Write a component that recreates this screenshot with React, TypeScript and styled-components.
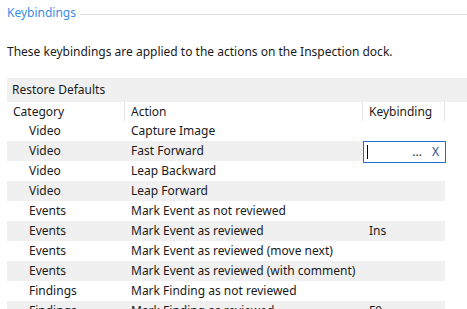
import React from "react";
import styled, { createGlobalStyle } from "styled-components";

const GlobalStyle = createGlobalStyle`
  html, body {
    margin: 0;
    padding: 0;
    background: #ffffff;
  }
  body {
    font-family: "Noto Sans", "Open Sans", sans-serif;
    font-size: 12px;
    color: #1a1a1a;
    overflow: hidden;
  }
`;

interface Binding {
    category: string;
    action: string;
    key?: string;
    editing?: boolean;
}

const bindings: Binding[] = [
    { category: "Video", action: "Capture Image" },
    { category: "Video", action: "Fast Forward", editing: true },
    { category: "Video", action: "Leap Backward" },
    { category: "Video", action: "Leap Forward" },
    { category: "Events", action: "Mark Event as not reviewed" },
    { category: "Events", action: "Mark Event as reviewed", key: "Ins" },
    { category: "Events", action: "Mark Event as reviewed (move next)" },
    { category: "Events", action: "Mark Event as reviewed (with comment)" },
    { category: "Findings", action: "Mark Finding as not reviewed" },
    { category: "Findings", action: "Mark Finding as reviewed", key: "F9" },
];

const App: React.FC = () => {
    return (
        <>
            <GlobalStyle />
            <Page>
                <GroupHeader>
                    <GroupTitle>Keybindings</GroupTitle>
                    <GroupLine />
                </GroupHeader>
                <Description>
                    These keybindings are applied to the actions on the Inspection dock.
                </Description>
                <Toolbar>
                    <ToolButton>Restore Defaults</ToolButton>
                </Toolbar>
                <Table>
                    <HeaderRow>
                        <HeaderCell>Category</HeaderCell>
                        <HeaderCell>Action</HeaderCell>
                        <HeaderCell>Keybinding</HeaderCell>
                    </HeaderRow>
                    {bindings.map((b, i) => (
                        <Row key={i} $striped={i % 2 === 1}>
                            <CategoryCell>{b.category}</CategoryCell>
                            <Cell>{b.action}</Cell>
                            {b.editing ? (
                                <KeyCell>
                                    <Editor>
                                        <Caret />
                                        <EditorDots>...</EditorDots>
                                        <EditorClear>X</EditorClear>
                                    </Editor>
                                </KeyCell>
                            ) : (
                                <KeyCell>{b.key}</KeyCell>
                            )}
                        </Row>
                    ))}
                </Table>
            </Page>
        </>
    );
};

const Page = styled.div`
  padding: 3px 0 0 7px;
  width: 467px;
  box-sizing: border-box;
`;

const GroupHeader = styled.div`
  display: flex;
  align-items: center;
  height: 22px;
`;

const GroupTitle = styled.span`
  color: #3b8de4;
  font-size: 12px;
  line-height: 16px;
  margin-top: -2px;
`;

const GroupLine = styled.div`
  flex: 1;
  height: 1px;
  background: #dcdcdc;
  margin-left: 4px;
`;

const Description = styled.div`
  margin-top: 19px;
  line-height: 16px;
  height: 16px;
`;

const Toolbar = styled.div`
  margin-top: 18px;
  height: 24px;
  background: #f0f0f0;
  display: flex;
  align-items: center;
  padding-left: 5px;
`;

const ToolButton = styled.span`
  line-height: 16px;
`;

const Table = styled.div`
  width: 438px;
`;

const columns = "118px 238px 82px";

const HeaderRow = styled.div`
  display: grid;
  grid-template-columns: ${columns};
  height: 19px;
  align-items: center;
`;

const HeaderCell = styled.div`
  padding-left: 6px;
  line-height: 19px;
  border-right: 1px solid #e5e5e5;
`;

const Row = styled.div<{ $striped: boolean }>`
  display: grid;
  grid-template-columns: ${columns};
  height: 20px;
  align-items: center;
  background: ${(p) => (p.$striped ? "#f0f0f0" : "transparent")};
`;

const Cell = styled.div`
  padding-left: 6px;
  line-height: 20px;
  white-space: nowrap;
`;

const CategoryCell = styled(Cell)`
  padding-left: 22px;
`;

const KeyCell = styled(Cell)`
  position: relative;
  height: 20px;
`;

const Editor = styled.div`
  position: absolute;
  left: 0;
  top: 0;
  width: 83px;
  height: 22px;
  box-sizing: border-box;
  border: 1px solid #1c6fcd;
  background: #ffffff;
  display: flex;
  align-items: center;
  padding: 0 6px 0 3px;
`;

const Caret = styled.div`
  width: 1px;
  height: 14px;
  background: #000000;
`;

const EditorDots = styled.span`
  margin-left: auto;
  line-height: 16px;
  color: #333333;
`;

const EditorClear = styled.span`
  margin-left: 10px;
  line-height: 16px;
  color: #2e4f8e;
`;

export default App;
